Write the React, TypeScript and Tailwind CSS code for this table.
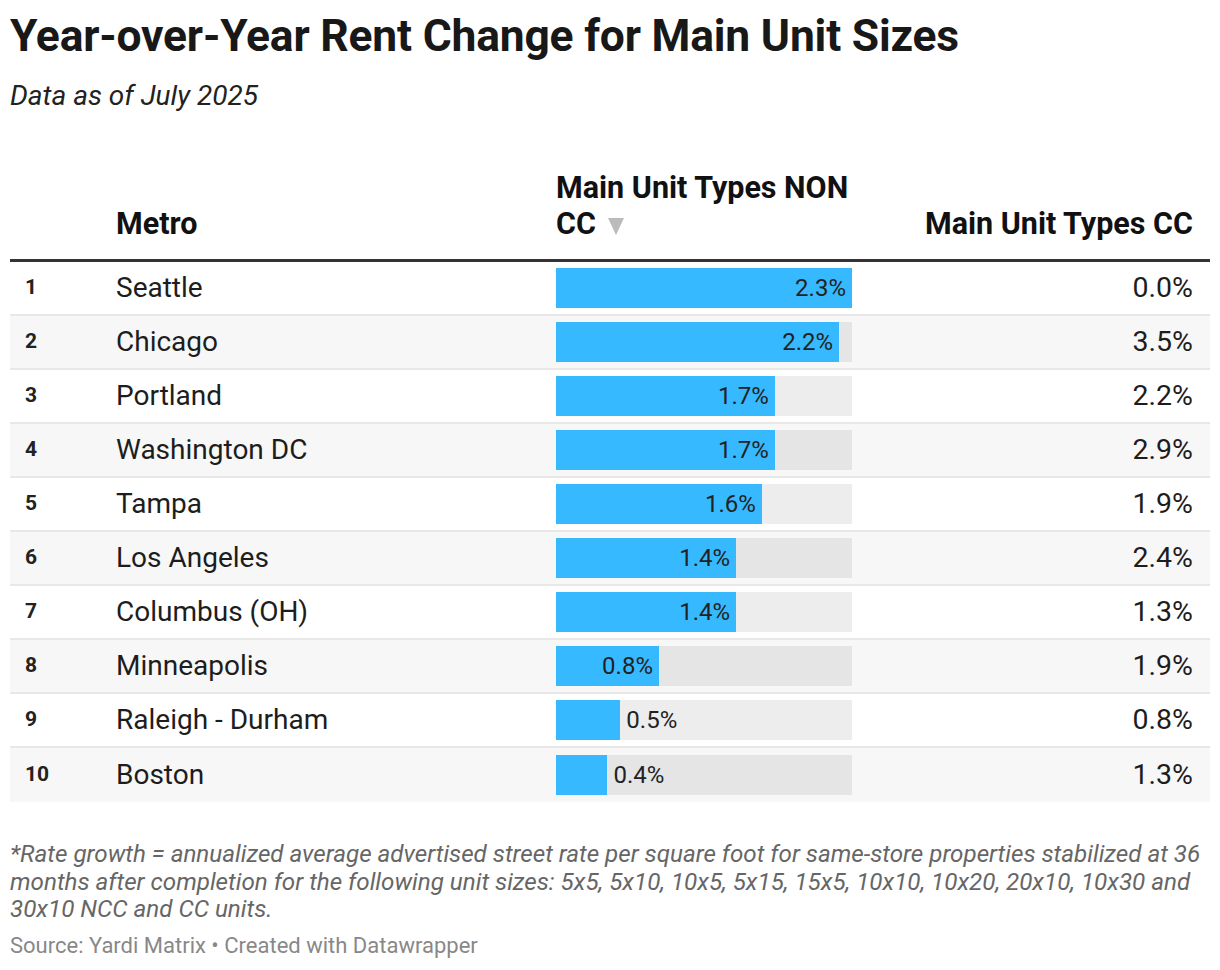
import React from "react";

const rows = [
  { rank: 1, metro: "Seattle", non: 2.3, cc: "0.0%" },
  { rank: 2, metro: "Chicago", non: 2.2, cc: "3.5%" },
  { rank: 3, metro: "Portland", non: 1.7, cc: "2.2%" },
  { rank: 4, metro: "Washington DC", non: 1.7, cc: "2.9%" },
  { rank: 5, metro: "Tampa", non: 1.6, cc: "1.9%" },
  { rank: 6, metro: "Los Angeles", non: 1.4, cc: "2.4%" },
  { rank: 7, metro: "Columbus (OH)", non: 1.4, cc: "1.3%" },
  { rank: 8, metro: "Minneapolis", non: 0.8, cc: "1.9%" },
  { rank: 9, metro: "Raleigh - Durham", non: 0.5, cc: "0.8%" },
  { rank: 10, metro: "Boston", non: 0.4, cc: "1.3%" },
];

export default function App() {
  return (
    <div
      className="w-[1220px] h-[970px] bg-white text-[#181818] px-[10px] pt-[12px]"
      style={{ fontFamily: "Roboto, 'Liberation Sans', sans-serif" }}
    >
      <h1 className="text-[44.4px] font-bold leading-[48px] tracking-[-0.2px] whitespace-nowrap">
        Year-over-Year Rent Change for Main Unit Sizes
      </h1>
      <p className="text-[28px] italic leading-[34px] mt-[19px] text-[#222]">Data as of July 2025</p>

      <div className="mt-[57px] w-[1200px]">
        {/* header */}
        <div className="flex items-end border-b-[3px] border-[#333] pb-[17px] font-bold text-[30.5px] leading-[36px] text-[#111]">
          <div className="w-[106px]" />
          <div className="w-[440px]">Metro</div>
          <div className="w-[300px]">
            Main Unit Types NON
            <br />
            <span className="inline-flex items-center">
              CC
              <svg width="16" height="17" viewBox="0 0 16 17" className="ml-[12px] mt-[4px]">
                <polygon points="0,0 16,0 8,17" fill="#bbbbbb" />
              </svg>
            </span>
          </div>
          <div className="flex-1 text-right pr-[17px] whitespace-nowrap">Main Unit Types CC</div>
        </div>

        {rows.map((r, i) => {
          const pct = (r.non / 2.3) * 100;
          const inside = r.non >= 0.8;
          const odd = i % 2 === 1;
          return (
            <div
              key={r.rank}
              className={`flex items-center h-[54px] ${i < rows.length - 1 ? "border-b-[2px] border-[#e8e8e8]" : ""} ${
                odd ? "bg-[#f7f7f7]" : "bg-white"
              }`}
            >
              <div className="w-[106px] pl-[15px] text-[21px] font-bold text-[#222]">{r.rank}</div>
              <div className="w-[440px] text-[28px] text-[#1d1d1d] whitespace-nowrap">{r.metro}</div>
              <div className="w-[296px] h-[40px] bg-[#00000012] flex items-center">
                <div
                  className="h-full bg-[#36b9fe] flex items-center justify-end"
                  style={{ width: `${pct}%` }}
                >
                  {inside && <span className="text-[24px] text-[#222] pr-[6px]">{r.non.toFixed(1)}%</span>}
                </div>
                {!inside && <span className="text-[24px] text-[#222] pl-[6px]">{r.non.toFixed(1)}%</span>}
              </div>
              <div className="flex-1 text-right pr-[17px] text-[28.5px] text-[#1d1d1d]">{r.cc}</div>
            </div>
          );
        })}
      </div>

      <p className="mt-[39px] text-[24.2px] italic leading-[27.5px] text-[#666] w-[1200px]">
        *Rate growth = annualized average advertised street rate per square foot for same-store properties stabilized at 36
        months after completion for the following unit sizes: 5x5, 5x10, 10x5, 5x15, 15x5, 10x10, 10x20, 20x10, 10x30 and
        30x10 NCC and CC units.
      </p>
      <p className="mt-[9px] text-[22px] text-[#888] leading-[26px]">Source: Yardi Matrix • Created with Datawrapper</p>
    </div>
  );
}
